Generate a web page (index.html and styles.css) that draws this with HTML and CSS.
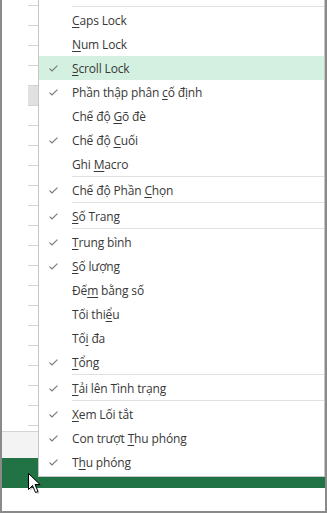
FILE: index.html
```html
<!DOCTYPE html>
<html lang="vi">
<head>
<meta charset="utf-8">
<title>Status bar menu</title>
<link rel="stylesheet" href="styles.css">
</head>
<body>
<div class="frame">
  <div class="sheet">
    <div class="gutter"></div>
    <div class="rows">
      <div class="row"></div><div class="row"></div><div class="row"></div><div class="row"></div>
      <div class="row sel"></div><div class="row"></div><div class="row"></div><div class="row"></div>
      <div class="row"></div><div class="row"></div><div class="row"></div><div class="row"></div>
      <div class="row"></div><div class="row"></div><div class="row"></div><div class="row"></div>
      <div class="row"></div><div class="row"></div><div class="row"></div><div class="row"></div>
      <div class="row"></div><div class="row"></div>
    </div>
  </div>
  <div class="status"></div>
  <div class="greenbar"></div>
  <div class="below"></div>

  <div class="menu">
    <div class="sep"></div>
    <div class="item"><span class="chk"></span><span class="label"><u>C</u>aps Lock</span></div>
    <div class="item"><span class="chk"></span><span class="label"><u>N</u>um Lock</span></div>
    <div class="item hot"><span class="chk"><svg viewBox="0 0 9 7"><polyline points="0.6,3.6 3,6 8.4,0.6"/></svg></span><span class="label"><u>S</u>croll Lock</span></div>
    <div class="item"><span class="chk"><svg viewBox="0 0 9 7"><polyline points="0.6,3.6 3,6 8.4,0.6"/></svg></span><span class="label">Phần thập phân <u>c</u>ố định</span></div>
    <div class="item"><span class="chk"></span><span class="label">Chế độ <u>G</u>õ đè</span></div>
    <div class="item"><span class="chk"><svg viewBox="0 0 9 7"><polyline points="0.6,3.6 3,6 8.4,0.6"/></svg></span><span class="label">Chế độ <u>C</u>uối</span></div>
    <div class="item"><span class="chk"></span><span class="label">Ghi <u>M</u>acro</span></div>
    <div class="sep"></div>
    <div class="item"><span class="chk"><svg viewBox="0 0 9 7"><polyline points="0.6,3.6 3,6 8.4,0.6"/></svg></span><span class="label">Chế độ Phần <u>C</u>họn</span></div>
    <div class="sep"></div>
    <div class="item"><span class="chk"><svg viewBox="0 0 9 7"><polyline points="0.6,3.6 3,6 8.4,0.6"/></svg></span><span class="label"><u>S</u>ố Trang</span></div>
    <div class="sep"></div>
    <div class="item"><span class="chk"><svg viewBox="0 0 9 7"><polyline points="0.6,3.6 3,6 8.4,0.6"/></svg></span><span class="label"><u>T</u>rung bình</span></div>
    <div class="item"><span class="chk"><svg viewBox="0 0 9 7"><polyline points="0.6,3.6 3,6 8.4,0.6"/></svg></span><span class="label"><u>S</u>ố lượng</span></div>
    <div class="item"><span class="chk"></span><span class="label">Đế<u>m</u> bằng số</span></div>
    <div class="item"><span class="chk"></span><span class="label">Tối thi<u>ể</u>u</span></div>
    <div class="item"><span class="chk"></span><span class="label">Tố<u>i</u> đa</span></div>
    <div class="item"><span class="chk"><svg viewBox="0 0 9 7"><polyline points="0.6,3.6 3,6 8.4,0.6"/></svg></span><span class="label"><u>T</u>ổng</span></div>
    <div class="sep"></div>
    <div class="item"><span class="chk"><svg viewBox="0 0 9 7"><polyline points="0.6,3.6 3,6 8.4,0.6"/></svg></span><span class="label"><u>T</u>ải lên Tình trạng</span></div>
    <div class="sep"></div>
    <div class="item"><span class="chk"><svg viewBox="0 0 9 7"><polyline points="0.6,3.6 3,6 8.4,0.6"/></svg></span><span class="label"><u>X</u>em Lối tắt</span></div>
    <div class="item"><span class="chk"><svg viewBox="0 0 9 7"><polyline points="0.6,3.6 3,6 8.4,0.6"/></svg></span><span class="label">Con trượt <u>T</u>hu phóng</span></div>
    <div class="item"><span class="chk"><svg viewBox="0 0 9 7"><polyline points="0.6,3.6 3,6 8.4,0.6"/></svg></span><span class="label">T<u>h</u>u phóng</span></div>
  </div>

  <svg class="cursor" viewBox="0 0 15 23" width="15" height="23">
    <path class="shadow" d="M2,2 L2,18 L6,14 L9,21 L11.5,20 L8.5,13 L14,13 Z"/>
    <path class="arrow" d="M0.5,0.5 L0.5,16.5 L4.5,12.5 L7.5,19.5 L10,18.5 L7,11.5 L12,11.5 Z"/>
  </svg>
</div>
</body>
</html>
```

FILE: styles.css
```css
html, body {
  margin: 0;
  padding: 0;
  background: #ffffff;
}

.frame {
  position: relative;
  width: 327px;
  height: 513px;
  box-sizing: border-box;
  border: 2px solid #8a8a8a;
  border-top: 0;
  background: #ffffff;
  overflow: hidden;
}

.sheet {
  display: flex;
  height: 431px;
  overflow: hidden;
}

.gutter {
  width: 26px;
  flex: none;
}

.rows {
  flex: 1;
  padding-top: 5px;
}

.row {
  height: 20px;
  box-sizing: border-box;
  border-top: 1px solid #d4d4d4;
}

.row.sel {
  background: #e1e1e1;
}

.status {
  height: 27px;
  box-sizing: border-box;
  border-top: 1px solid #d4d4d4;
  background: #f3f3f3;
}

.greenbar {
  height: 30px;
  background: #217346;
}

.below {
  height: 23px;
  background: #ffffff;
}

.menu {
  position: absolute;
  top: 0;
  left: 36px;
  right: 0;
  box-sizing: border-box;
  background: #ffffff;
  border: 1px solid #c6c6c6;
  border-top: 0;
  padding: 6px 0 2px 0;
  font-family: "Open Sans", "Noto Sans", sans-serif;
  font-size: 12px;
  letter-spacing: -0.15px;
  color: #383838;
}

.sep {
  height: 1px;
  margin: 0 0 1px 33px;
  background: #e1e1e1;
}

.item {
  display: flex;
  align-items: center;
  height: 24px;
  padding-left: 10px;
  white-space: nowrap;
}

.item.hot {
  background: #d3f0e0;
}

.chk {
  width: 23px;
  flex: none;
  display: flex;
  align-items: center;
}

.chk svg {
  width: 9px;
  height: 7px;
  fill: none;
  stroke: #7a7a7a;
  stroke-width: 1.2;
}

.label u {
  text-decoration: underline;
  text-underline-offset: 2px;
}

.cursor {
  position: absolute;
  left: 26px;
  top: 473px;
}

.cursor .shadow {
  fill: rgba(0, 0, 0, 0.22);
}

.cursor .arrow {
  fill: #ffffff;
  stroke: #000000;
  stroke-width: 1;
  stroke-linejoin: miter;
}
```
